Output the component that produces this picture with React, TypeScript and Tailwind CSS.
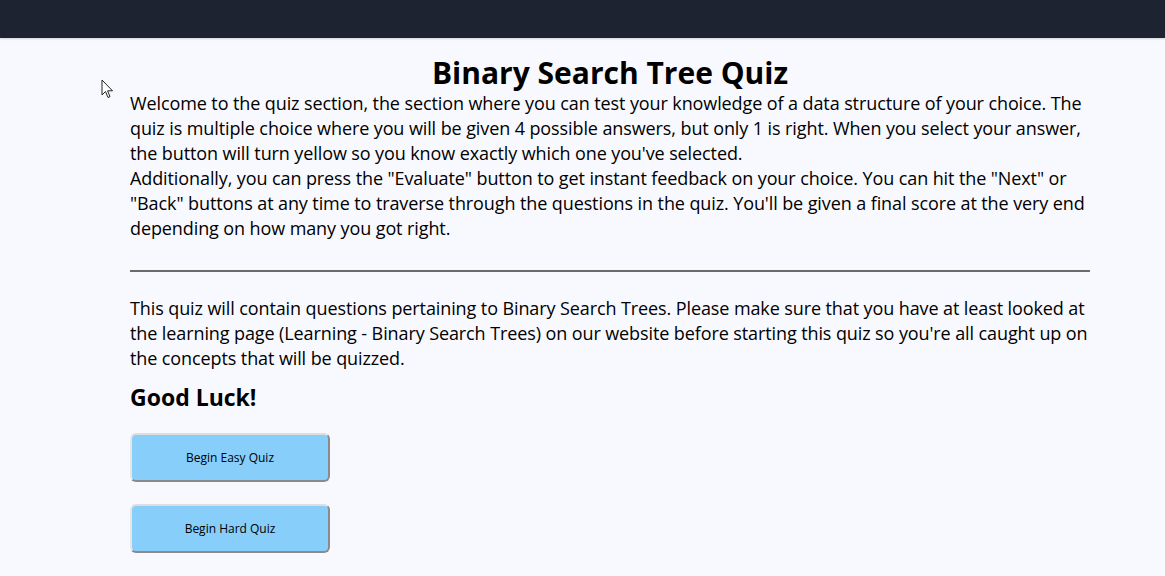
import React from "react";

export default function App() {
  return (
    <div className="relative min-h-[576px] bg-[#f8f9ff] text-black" style={{ fontFamily: "'Open Sans', 'Noto Sans', sans-serif" }}>
      <div className="h-[38px] bg-[#1e2332] shadow-[0_1px_2px_rgba(0,0,0,0.15)]"></div>
      <svg className="absolute left-[101px] top-[79px]" width="14" height="20" viewBox="0 0 14 20">
        <path d="M1 1 L1 16 L4.5 12.5 L7 18.5 L9 17.6 L6.6 11.8 L11.5 11.8 Z" fill="white" stroke="#222" strokeWidth="1" strokeLinejoin="round" />
      </svg>
      <div className="ml-[130px] w-[960px] pt-[17px]">
        <h1 className="text-center text-[30px] font-bold leading-[36px]">Binary Search Tree Quiz</h1>
        <p className="text-[18px] leading-[25px] tracking-[-0.1px]">
          Welcome to the quiz section, the section where you can test your knowledge of a data structure of your choice. The quiz is multiple choice where you will be given 4 possible answers, but only 1 is right. When you select your answer, the button will turn yellow so you know exactly which one you've selected.
          <br />
          Additionally, you can press the "Evaluate" button to get instant feedback on your choice. You can hit the "Next" or "Back" buttons at any time to traverse through the questions in the quiz. You'll be given a final score at the very end depending on how many you got right.
        </p>
        <hr className="mt-[29px] mb-[24px] border-0 border-t-2 border-[#6b6b6b]" />
        <p className="text-[18px] leading-[25px] tracking-[-0.1px]">
          This quiz will contain questions pertaining to Binary Search Trees. Please make sure that you have at least looked at the learning page (Learning - Binary Search Trees) on our website before starting this quiz so you're all caught up on the concepts that will be quizzed.
        </p>
        <h2 className="mt-[10px] text-[23px] font-bold leading-[32px]">Good Luck!</h2>
        <div className="mt-[20px] flex flex-col gap-[22px]">
          <button className="h-[49px] w-[200px] rounded-[6px] border-2 border-t-[#dedede] border-l-[#e6e6e6] border-r-[#8a8a8a] border-b-[#8a8a8a] bg-[#87cefa] text-[12px] text-black">
            Begin Easy Quiz
          </button>
          <button className="h-[49px] w-[200px] rounded-[6px] border-2 border-t-[#dedede] border-l-[#e6e6e6] border-r-[#8a8a8a] border-b-[#8a8a8a] bg-[#87cefa] text-[12px] text-black">
            Begin Hard Quiz
          </button>
        </div>
      </div>
    </div>
  );
}
